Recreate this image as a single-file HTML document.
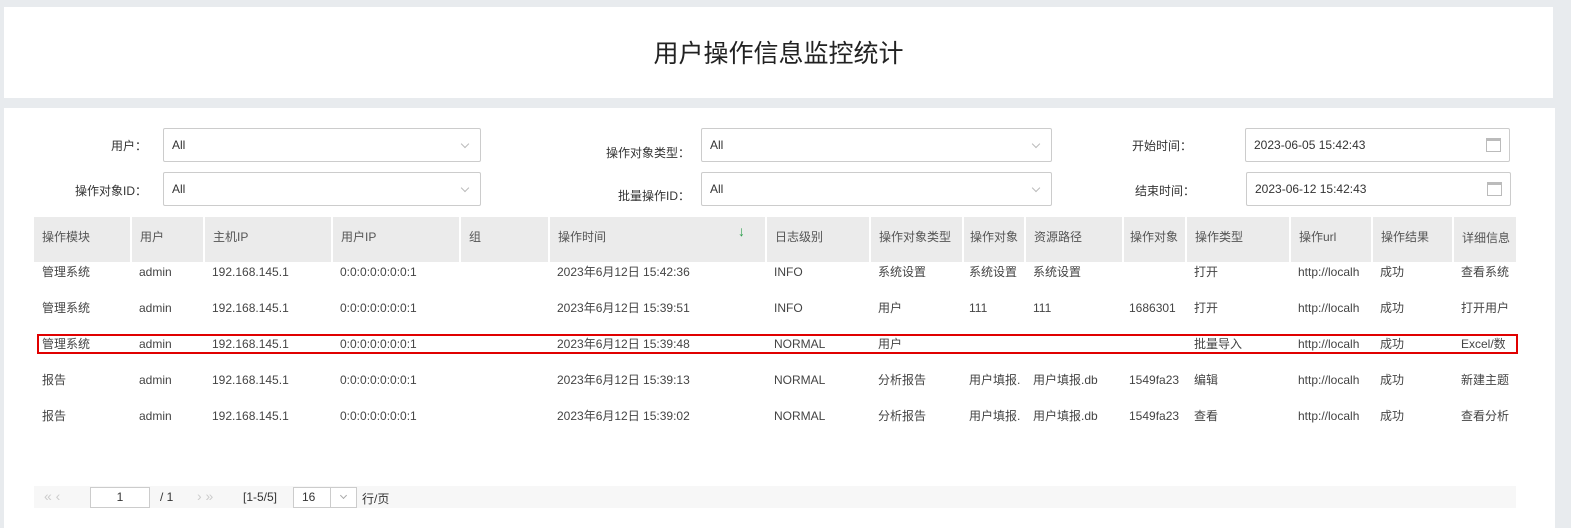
<!DOCTYPE html>
<html><head><meta charset="utf-8"><style>
*{box-sizing:border-box;margin:0;padding:0}
body{width:1571px;height:520px;background:#e8ebee;font-family:"Liberation Sans","Noto Sans CJK SC",sans-serif;font-size:12px;color:#333;position:relative;overflow:hidden}
.p1{position:absolute;left:4px;top:7px;width:1549px;height:91px;background:#fff}
.p1 h1{font-weight:normal;font-size:25px;text-align:center;line-height:94px;color:#222}
.p2{position:absolute;left:4px;top:108px;width:1551px;height:420px;background:#fff}
.lbl{position:absolute;font-size:12px;color:#333;text-align:right}
.sel{position:absolute;height:34px;border:1px solid #ccc;border-radius:2px;padding-left:8px;line-height:32px;font-size:12px;background:#fff}
.sel .ch{position:absolute;right:12px;top:12px;width:6px;height:6px;border-right:1px solid #bbb;border-bottom:1px solid #bbb;transform:rotate(45deg)}
.cal{position:absolute;right:8px;top:9px;width:15px;height:14px;border:1px solid #bbb;border-top-width:3px}
.hdr{position:absolute;top:217px;height:45px;background:#ebebeb;line-height:40px;padding-left:8px;color:#555}
.c{position:absolute;white-space:nowrap;overflow:hidden;padding-left:8px;color:#444}
.red{position:absolute;left:37px;top:334px;width:1481px;height:20px;border:2px solid #e00000}
.pg{position:absolute;left:34px;top:486px;width:1482px;height:22px;background:#f7f7f7;font-size:12px;color:#333}
.pg span{position:absolute;top:4px}
</style></head><body>
<div class="p1"><h1>用户操作信息监控统计</h1></div>
<div class="p2"></div>
<div class="lbl" style="left:60px;top:137px;width:87px">用户：</div>
<div class="sel" style="left:163px;top:128px;width:318px">All<i class="ch"></i></div>
<div class="lbl" style="left:50px;top:182px;width:97px">操作对象ID：</div>
<div class="sel" style="left:163px;top:172px;width:318px">All<i class="ch"></i></div>
<div class="lbl" style="left:580px;top:144px;width:110px">操作对象类型：</div>
<div class="sel" style="left:701px;top:128px;width:351px">All<i class="ch"></i></div>
<div class="lbl" style="left:580px;top:187px;width:110px">批量操作ID：</div>
<div class="sel" style="left:701px;top:172px;width:351px">All<i class="ch"></i></div>
<div class="lbl" style="left:1120px;top:137px;width:72px">开始时间：</div>
<div class="sel" style="left:1245px;top:128px;width:265px">2023-06-05 15:42:43<i class="cal"></i></div>
<div class="lbl" style="left:1120px;top:182px;width:75px">结束时间：</div>
<div class="sel" style="left:1246px;top:172px;width:265px">2023-06-12 15:42:43<i class="cal"></i></div>

<div class="hdr" style="left:34px;width:96px">操作模块</div>
<div class="hdr" style="left:132px;width:71px">用户</div>
<div class="hdr" style="left:205px;width:126px">主机IP</div>
<div class="hdr" style="left:333px;width:126px">用户IP</div>
<div class="hdr" style="left:461px;width:87px">组</div>
<div class="hdr" style="left:550px;width:215px">操作时间<span style="position:absolute;left:188px;top:-6px;color:#2a9d4a;font-weight:bold;font-size:14px">↓</span></div>
<div class="hdr" style="left:767px;width:102px">日志级别</div>
<div class="hdr" style="left:871px;width:91px">操作对象类型</div>
<div class="hdr" style="left:964px;width:60px;padding-left:6px">操作对象</div>
<div class="hdr" style="left:1026px;width:96px">资源路径</div>
<div class="hdr" style="left:1124px;width:61px;padding-left:6px">操作对象</div>
<div class="hdr" style="left:1187px;width:102px">操作类型</div>
<div class="hdr" style="left:1291px;width:80px">操作url</div>
<div class="hdr" style="left:1373px;width:79px">操作结果</div>
<div class="hdr" style="left:1454px;width:62px;line-height:42px">详细信息</div>

<div id="rows"></div>
<div class="red"></div>
<script>
var rows=[
["管理系统","admin","192.168.145.1","0:0:0:0:0:0:0:1","","2023年6月12日 15:42:36","INFO","系统设置","系统设置","系统设置","","打开","http://localh","成功","查看系统"],
["管理系统","admin","192.168.145.1","0:0:0:0:0:0:0:1","","2023年6月12日 15:39:51","INFO","用户","111","111","1686301","打开","http://localh","成功","打开用户"],
["管理系统","admin","192.168.145.1","0:0:0:0:0:0:0:1","","2023年6月12日 15:39:48","NORMAL","用户","","","","批量导入","http://localh","成功","Excel/数"],
["报告","admin","192.168.145.1","0:0:0:0:0:0:0:1","","2023年6月12日 15:39:13","NORMAL","分析报告","用户填报.","用户填报.db","1549fa23","编辑","http://localh","成功","新建主题"],
["报告","admin","192.168.145.1","0:0:0:0:0:0:0:1","","2023年6月12日 15:39:02","NORMAL","分析报告","用户填报.","用户填报.db","1549fa23","查看","http://localh","成功","查看分析"]];
var xs=[34,131,204,332,460,549,766,870,963,1025,1123,1186,1290,1372,1453,1516];
var h="";
rows.forEach(function(r,i){var y=264+i*36;r.forEach(function(t,j){
var pl=(j==8||j==10)?6:8;
h+='<div class="c" style="left:'+xs[j]+'px;top:'+y+'px;width:'+(xs[j+1]-xs[j])+'px;line-height:16px;padding-left:'+pl+'px">'+t+'</div>';});});
document.getElementById('rows').innerHTML=h;
</script>
<div class="pg">
<span style="left:10px;color:#ccc;font-size:14px;top:2px">«&nbsp;‹</span>
<div style="position:absolute;left:56px;top:1px;width:60px;height:21px;border:1px solid #ccc;background:#fff;text-align:center;line-height:19px">1</div>
<span style="left:126px">/ 1</span>
<span style="left:163px;color:#ccc;font-size:14px;top:2px">›&nbsp;»</span>
<span style="left:209px">[1-5/5]</span>
<div style="position:absolute;left:259px;top:1px;width:64px;height:21px;border:1px solid #ccc;background:#fff;line-height:19px;padding-left:8px">16<div style="position:absolute;left:36px;top:0;width:1px;height:19px;background:#ccc"></div><i style="position:absolute;left:47px;top:5px;width:5px;height:5px;border-right:1px solid #aaa;border-bottom:1px solid #aaa;transform:rotate(45deg)"></i></div>
<span style="left:328px">行/页</span>
</div>
</body></html>
